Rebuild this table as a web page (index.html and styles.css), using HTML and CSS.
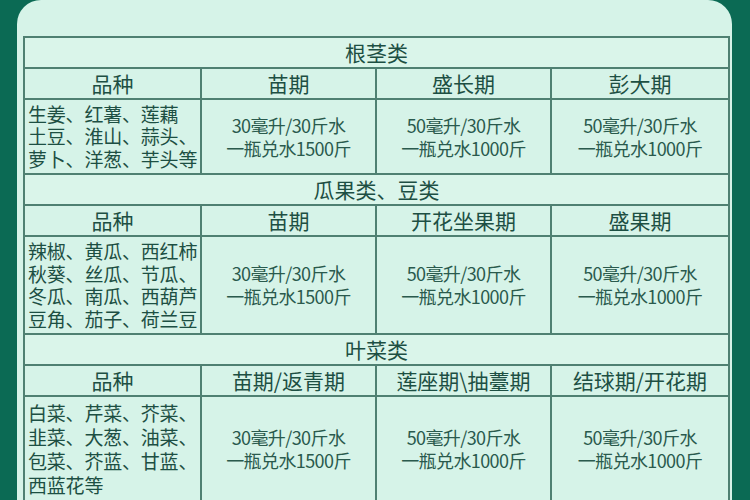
FILE: index.html
```html
<!DOCTYPE html>
<html lang="zh-CN">
<head>
<meta charset="utf-8">
<title>用量表</title>
<link rel="stylesheet" href="styles.css">
</head>
<body>
<div class="card">
  <table class="grid">
    <colgroup>
      <col class="c1"><col class="c2"><col class="c3"><col class="c4">
    </colgroup>
    <tr class="title"><td colspan="4">根茎类</td></tr>
    <tr class="head"><td>品种</td><td>苗期</td><td>盛长期</td><td>彭大期</td></tr>
    <tr class="data r1">
      <td class="kind">生姜、红薯、莲藕<br>土豆、淮山、蒜头、<br>萝卜、洋葱、芋头等</td>
      <td class="dose">30毫升/30斤水<br>一瓶兑水1500斤</td>
      <td class="dose">50毫升/30斤水<br>一瓶兑水1000斤</td>
      <td class="dose">50毫升/30斤水<br>一瓶兑水1000斤</td>
    </tr>
    <tr class="title"><td colspan="4">瓜果类、豆类</td></tr>
    <tr class="head"><td>品种</td><td>苗期</td><td>开花坐果期</td><td>盛果期</td></tr>
    <tr class="data r2">
      <td class="kind">辣椒、黄瓜、西红柿<br>秋葵、丝瓜、节瓜、<br>冬瓜、南瓜、西葫芦<br>豆角、茄子、荷兰豆</td>
      <td class="dose">30毫升/30斤水<br>一瓶兑水1500斤</td>
      <td class="dose">50毫升/30斤水<br>一瓶兑水1000斤</td>
      <td class="dose">50毫升/30斤水<br>一瓶兑水1000斤</td>
    </tr>
    <tr class="title"><td colspan="4">叶菜类</td></tr>
    <tr class="head"><td>品种</td><td>苗期/返青期</td><td>莲座期\抽薹期</td><td>结球期/开花期</td></tr>
    <tr class="data r3">
      <td class="kind">白菜、芹菜、芥菜、<br>韭菜、大葱、油菜、<br>包菜、芥蓝、甘蓝、<br>西蓝花等</td>
      <td class="dose">30毫升/30斤水<br>一瓶兑水1500斤</td>
      <td class="dose">50毫升/30斤水<br>一瓶兑水1000斤</td>
      <td class="dose">50毫升/30斤水<br>一瓶兑水1000斤</td>
    </tr>
  </table>
</div>
</body>
</html>
```
FILE: styles.css
```css
html, body {
  margin: 0;
  padding: 0;
  height: 100%;
  overflow: hidden;
}
body {
  background: #0b6a54;
  font-family: "Noto Sans CJK SC", "Noto Sans", sans-serif;
  color: #1d4f43;
}
.card {
  margin: 0 18px 0 17px;
  height: 540px;
  background: #d6f3e8;
  border-radius: 24px 24px 0 0;
  padding: 36px 5px 0 6px;
  box-sizing: border-box;
}
.grid {
  border-collapse: collapse;
  table-layout: fixed;
  width: 705px;
}
.c1 { width: 177px; }
.c2 { width: 175px; }
.c3 { width: 175px; }
.c4 { width: 178px; }
.grid td {
  border: 2px solid #4f8072;
  padding: 0;
  white-space: nowrap;
  overflow: hidden;
}
.title td {
  height: 29px;
  text-align: center;
  font-size: 21px;
  line-height: 29px;
  background: #daf5ea;
}
.head td {
  height: 29px;
  text-align: center;
  font-size: 21px;
  line-height: 29px;
}
.data td { vertical-align: middle; }
.r1 td { height: 73px; }
.r2 td { height: 96px; }
.r3 td { height: 104px; }
.kind {
  text-align: left;
  padding-left: 3px !important;
  font-size: 19px;
  line-height: 22.5px;
  letter-spacing: -0.2px;
}
.r3 .kind { line-height: 24px; }
.dose {
  text-align: center;
  font-size: 18px;
  line-height: 23px;
  letter-spacing: -0.6px;
  color: #2a5a4d;
}
```
